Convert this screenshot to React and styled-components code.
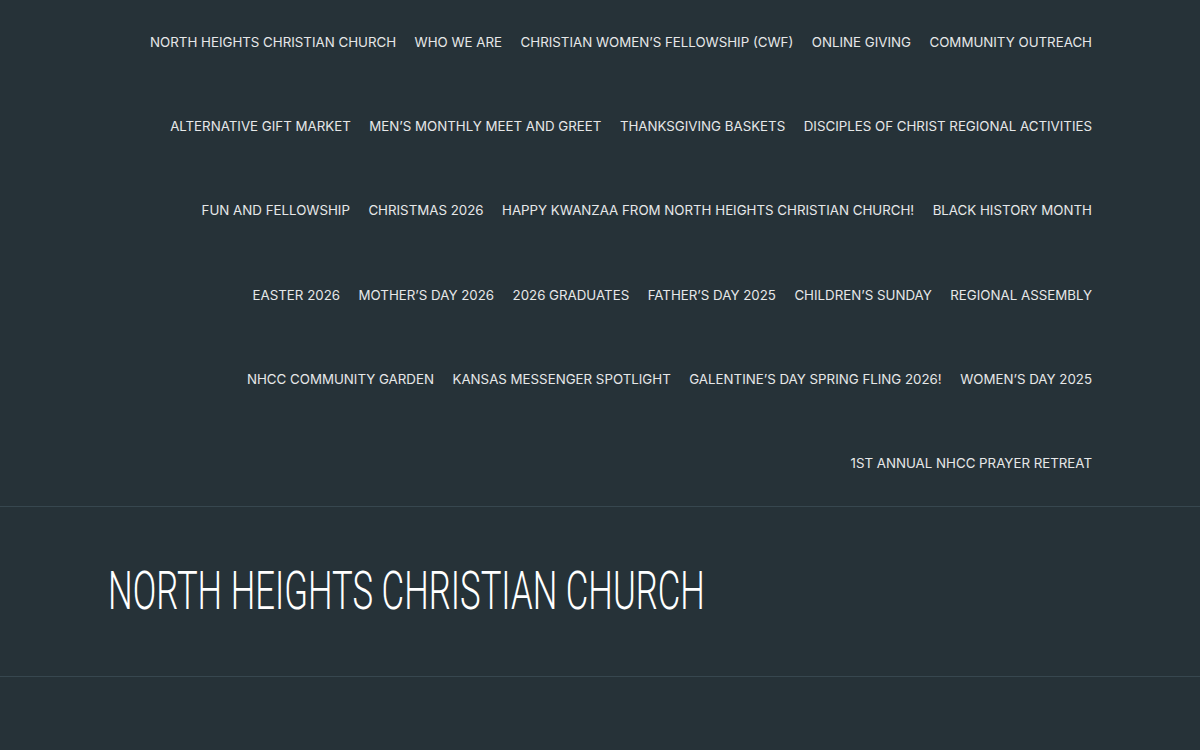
import React from "react";
import styled, { createGlobalStyle } from "styled-components";

const Global = createGlobalStyle`
  html, body { margin: 0; padding: 0; background: #263238; }
  body { font-family: Inter, "Noto Sans", sans-serif; color: #e6e8e9; }
`;

const Header = styled.header`
  border-bottom: 1px solid #37474f;
`;

const Container = styled.div`
  width: 984px;
  margin: 0 auto;
`;

const NavList = styled.ul`
  list-style: none;
  margin: 0;
  padding: 0;
  display: flex;
  flex-wrap: wrap;
  justify-content: flex-end;
  column-gap: 18.5px;
`;

const NavItem = styled.li`
  padding: 31.67px 0;
  font-size: 13.3px;
  line-height: 21px;
`;

const NavLink = styled.a`
  text-transform: uppercase;
  color: #e6e8e9;
  text-decoration: none;
`;

const Branding = styled.div`
  border-bottom: 1px solid #37474f;
  height: 169px;
  display: flex;
  align-items: center;
`;

const SiteTitle = styled.h1`
  margin: 0;
  display: inline-block;
  font-family: Roboto, "Liberation Sans", sans-serif;
  font-weight: 300;
  font-size: 54px;
  line-height: 1;
  color: #ffffff;
  text-transform: uppercase;
  white-space: nowrap;
  transform: scaleX(0.643);
  transform-origin: left center;
`;

const items = [
  "North Heights Christian Church",
  "Who We Are",
  "Christian Women’s Fellowship (CWF)",
  "Online Giving",
  "Community Outreach",
  "Alternative Gift Market",
  "Men’s Monthly Meet and Greet",
  "Thanksgiving Baskets",
  "Disciples of Christ Regional Activities",
  "Fun and Fellowship",
  "Christmas 2026",
  "Happy Kwanzaa from North Heights Christian Church!",
  "Black History Month",
  "Easter 2026",
  "Mother’s Day 2026",
  "2026 Graduates",
  "Father’s Day 2025",
  "Children’s Sunday",
  "Regional Assembly",
  "NHCC Community Garden",
  "Kansas Messenger Spotlight",
  "Galentine’s Day Spring Fling 2026!",
  "Women’s Day 2025",
  "1st Annual NHCC Prayer Retreat",
];

export default function App() {
  return (
    <>
      <Global />
      <Header>
        <Container>
          <nav>
            <NavList>
              {items.map((t) => (
                <NavItem key={t}>
                  <NavLink href="#">{t}</NavLink>
                </NavItem>
              ))}
            </NavList>
          </nav>
        </Container>
      </Header>
      <Branding>
        <Container>
          <SiteTitle>North Heights Christian Church</SiteTitle>
        </Container>
      </Branding>
    </>
  );
}
